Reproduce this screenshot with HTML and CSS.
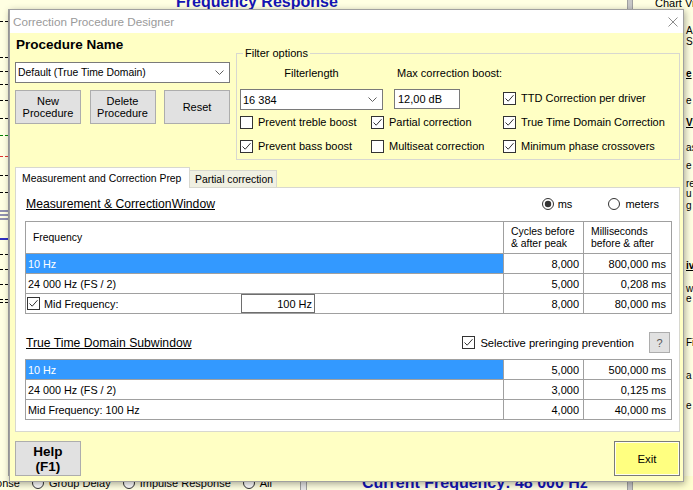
FILE: index.html
```html
<!DOCTYPE html>
<html>
<head>
<meta charset="utf-8">
<title>Correction Procedure Designer</title>
<link rel="stylesheet" href="styles.css">
</head>
<body>
<div class="app">
  <div class="app-top">
    <div class="app-title-area"><span class="app-title">Frequency Response</span></div>
    <div class="app-split"></div>
    <div class="app-chartview"><span class="gb-line"></span><span class="cv-text">Chart View</span></div>
  </div>
  <div class="app-mid">
    <div class="legend">
      <i class="lg"></i><i class="lg"></i><i class="lg"></i><i class="lg"></i><i class="lg"></i>
      <i class="lg"></i><i class="lg green"></i><i class="lg red"></i><i class="lg"></i><i class="lg"></i>
      <i class="lg gray"></i><i class="lg gray"></i><i class="lg gray"></i><i class="lg blue"></i><i class="lg"></i>
      <i class="lg"></i><i class="lg"></i><i class="lg"></i><i class="lg"></i>
    </div>
    <div class="app-center"></div>
    <div class="side">
      <span class="sw">Auto</span><span class="sw">Show</span><span class="sw bu">e</span><span class="sw">e</span>
      <span class="sw bu">View</span><span class="sw">as</span><span class="sw">e</span><span class="sw">re</span>
      <span class="sw">u</span><span class="sw">g</span><span class="sw bu">iv</span><span class="sw">w</span>
      <span class="sw">e</span><span class="sw">Fi</span><span class="sw">a</span><span class="sw">e</span>
    </div>
  </div>
  <div class="app-bottom">
    <div class="bt-left">
      <span>Response</span><span class="rd"></span><span>Group Delay</span><span class="rd"></span><span>Impulse Response</span><span class="rd"></span><span>All</span>
    </div>
    <div class="bt-sep"></div>
    <div class="bt-freq">Current Frequency: 48 000 Hz</div>
    <div class="app-split"></div>
    <div class="bt-right"></div>
  </div>
</div>

<div class="dialog">
  <div class="titlebar">
    <span class="title">Correction Procedure Designer</span>
    <svg class="close" width="10" height="10" viewBox="0 0 10 10"><path d="M0.5 0.5L9.5 9.5M9.5 0.5L0.5 9.5" stroke="#8c8c8c" stroke-width="1" fill="none"/></svg>
  </div>
  <div class="dbody">
    <div class="top">
      <div class="proc">
        <div class="proc-title">Procedure Name</div>
        <div class="combo proc-combo"><span class="combo-text">Default (True Time Domain)</span><svg class="chev" width="9" height="5" viewBox="0 0 9 5"><path d="M0.5 0.5L4.5 4.5L8.5 0.5" fill="none" stroke="#606060"/></svg></div>
        <div class="btn-row">
          <div class="btn">New<br>Procedure</div>
          <div class="btn">Delete<br>Procedure</div>
          <div class="btn">Reset</div>
        </div>
      </div>
      <fieldset class="filter">
        <legend>Filter options</legend>
        <div class="f-labels"><span class="f-lab1">Filterlength</span><span class="f-lab2">Max correction boost:</span></div>
        <div class="f-inputs">
          <div class="combo fl-combo"><span class="fl-text">16 384</span><svg class="chev" width="9" height="5" viewBox="0 0 9 5"><path d="M0.5 0.5L4.5 4.5L8.5 0.5" fill="none" stroke="#606060"/></svg></div>
          <div class="textbox boost">12,00 dB</div>
          <div class="cb ttd"><svg class="ck" width="13" height="13" viewBox="0 0 13 13"><rect x="0.5" y="0.5" width="12" height="12" fill="#fff" stroke="#333"/><path d="M2.5 6.5L5.2 9.2L10.5 3.2" fill="none" stroke="#333"/></svg><span>TTD Correction per driver</span></div>
        </div>
        <div class="f-grid">
          <div class="cb"><svg class="ck" width="13" height="13" viewBox="0 0 13 13"><rect x="0.5" y="0.5" width="12" height="12" fill="#fff" stroke="#333"/></svg><span>Prevent treble boost</span></div>
          <div class="cb"><svg class="ck" width="13" height="13" viewBox="0 0 13 13"><rect x="0.5" y="0.5" width="12" height="12" fill="#fff" stroke="#333"/><path d="M2.5 6.5L5.2 9.2L10.5 3.2" fill="none" stroke="#333"/></svg><span>Partial correction</span></div>
          <div class="cb"><svg class="ck" width="13" height="13" viewBox="0 0 13 13"><rect x="0.5" y="0.5" width="12" height="12" fill="#fff" stroke="#333"/><path d="M2.5 6.5L5.2 9.2L10.5 3.2" fill="none" stroke="#333"/></svg><span>True Time Domain Correction</span></div>
          <div class="cb"><svg class="ck" width="13" height="13" viewBox="0 0 13 13"><rect x="0.5" y="0.5" width="12" height="12" fill="#fff" stroke="#333"/><path d="M2.5 6.5L5.2 9.2L10.5 3.2" fill="none" stroke="#333"/></svg><span>Prevent bass boost</span></div>
          <div class="cb"><svg class="ck" width="13" height="13" viewBox="0 0 13 13"><rect x="0.5" y="0.5" width="12" height="12" fill="#fff" stroke="#333"/></svg><span>Multiseat correction</span></div>
          <div class="cb"><svg class="ck" width="13" height="13" viewBox="0 0 13 13"><rect x="0.5" y="0.5" width="12" height="12" fill="#fff" stroke="#333"/><path d="M2.5 6.5L5.2 9.2L10.5 3.2" fill="none" stroke="#333"/></svg><span>Minimum phase crossovers</span></div>
        </div>
      </fieldset>
    </div>

    <div class="tabs">
      <div class="tab active">Measurement and Correction Prep</div>
      <div class="tab">Partial correction</div>
    </div>

    <div class="panel">
      <div class="sec-head">
        <span class="sec-title">Measurement &amp; CorrectionWindow</span>
        <div class="radios">
          <svg class="rb" width="12" height="12" viewBox="0 0 12 12"><circle cx="6" cy="6" r="5.5" fill="#fff" stroke="#333"/><circle cx="6" cy="6" r="3.2" fill="#333"/></svg><span class="rl">ms</span>
          <svg class="rb rb2" width="12" height="12" viewBox="0 0 12 12"><circle cx="6" cy="6" r="5.5" fill="#fff" stroke="#333"/></svg><span class="rl rl2">meters</span>
        </div>
      </div>

      <div class="grid g1">
        <div class="c hd hd1">Frequency</div>
        <div class="c hd">Cycles before<br>&amp; after peak</div>
        <div class="c hd">Milliseconds<br>before &amp; after</div>

        <div class="c sel">10 Hz</div>
        <div class="c num">8,000</div>
        <div class="c num n3">800,000 ms</div>

        <div class="c">24 000 Hz (FS / 2)</div>
        <div class="c num">5,000</div>
        <div class="c num n3">0,208 ms</div>

        <div class="c mid">
          <div class="mid-lab"><svg class="ck" width="13" height="13" viewBox="0 0 13 13"><rect x="0.5" y="0.5" width="12" height="12" fill="#fff" stroke="#333"/><path d="M2.5 6.5L5.2 9.2L10.5 3.2" fill="none" stroke="#333"/></svg><span>Mid Frequency:</span></div>
          <div class="mid-box">100 Hz</div>
        </div>
        <div class="c num">8,000</div>
        <div class="c num n3">80,000 ms</div>
      </div>

      <div class="sec-head h2">
        <span class="sec-title">True Time Domain Subwindow</span>
        <div class="cb sel-pre"><svg class="ck" width="13" height="13" viewBox="0 0 13 13"><rect x="0.5" y="0.5" width="12" height="12" fill="#fff" stroke="#333"/><path d="M2.5 6.5L5.2 9.2L10.5 3.2" fill="none" stroke="#333"/></svg><span>Selective preringing prevention</span></div>
        <div class="qbtn">?</div>
      </div>

      <div class="grid g2">
        <div class="c sel">10 Hz</div>
        <div class="c num">5,000</div>
        <div class="c num n3">500,000 ms</div>

        <div class="c">24 000 Hz (FS / 2)</div>
        <div class="c num">3,000</div>
        <div class="c num n3">0,125 ms</div>

        <div class="c">Mid Frequency: 100 Hz</div>
        <div class="c num">4,000</div>
        <div class="c num n3">40,000 ms</div>
      </div>
    </div>

    <div class="footer">
      <div class="btn help">Help<br>(F1)</div>
      <div class="btn exit">Exit</div>
    </div>
  </div>
</div>
</body>
</html>
```

FILE: styles.css
```css
* { box-sizing: border-box; }
html, body { margin: 0; padding: 0; }
body {
  width: 693px;
  height: 490px;
  overflow: hidden;
  position: relative;
  background: #ffffe2;
  font-family: "Liberation Sans", Arial, sans-serif;
  font-size: 11px;
  color: #000;
}

/* ---------- background application ---------- */
.app {
  display: grid;
  grid-template-rows: 9px 1fr 14px;
  height: 490px;
}
.app-top { display: flex; height: 9px; overflow: hidden; }
.app-title-area {
  width: 627px;
  display: flex;
  align-items: flex-end;
  padding-left: 176px;
  overflow: hidden;
  background: #ffffe2;
}
.app-title {
  font-weight: bold;
  font-size: 16px;
  line-height: 15px;
  height: 15px;
  color: #1414b4;
  white-space: nowrap;
}
.app-split { width: 6px; background: #c8c8c8; border-left: 1px solid #a0a0a0; border-right: 1px solid #a0a0a0; }
.app-chartview {
  flex: 1;
  display: flex;
  align-items: flex-end;
  background: #ffffe2;
  overflow: hidden;
  padding-left: 20px;
}
.gb-line { width: 7px; height: 1px; background: #c8c8c8; align-self: center; margin-right: 2px; }
.cv-text { line-height: 11px; height: 11px; white-space: nowrap; }

.app-mid { display: grid; grid-template-columns: 9px 1fr 9px; overflow: hidden; }
.legend { display: flex; flex-direction: column; align-items: flex-start; background: #ffffe2; border-right: 1px solid #a8a8a8; }
.lg {
  display: block;
  width: 8px;
  height: 1px;
  background: repeating-linear-gradient(90deg, #000 0 3px, transparent 3px 5px);
}
.lg.green { background: repeating-linear-gradient(90deg, #008000 0 3px, transparent 3px 5px); }
.lg.red { background: repeating-linear-gradient(90deg, #e03030 0 3px, transparent 3px 5px); }
.lg.gray { background: #9090b0; height: 2px; }
.lg.blue { background: #3030c0; height: 2px; }
.lg:nth-child(1) { margin-top: 12px; }
.lg:nth-child(2) { margin-top: 35px; }
.lg:nth-child(3) { margin-top: 13px; }
.lg:nth-child(4) { margin-top: 12px; }
.lg:nth-child(5) { margin-top: 15px; }
.lg:nth-child(6) { margin-top: 17px; }
.lg:nth-child(7) { margin-top: 16px; }
.lg:nth-child(8) { margin-top: 20px; }
.lg:nth-child(9) { margin-top: 18px; }
.lg:nth-child(10) { margin-top: 16px; }
.lg:nth-child(11) { margin-top: 17px; }
.lg:nth-child(12) { margin-top: 2px; }
.lg:nth-child(13) { margin-top: 2px; }
.lg:nth-child(14) { margin-top: 18px; }
.lg:nth-child(15) { margin-top: 14px; }
.lg:nth-child(16) { margin-top: 14px; }
.lg:nth-child(17) { margin-top: 14px; }
.lg:nth-child(18) { margin-top: 14px; }
.lg:nth-child(19) { margin-top: 2px; }

.app-center { background: #ffffff; }
.side {
  display: flex;
  flex-direction: column;
  background: #ffffe2;
  overflow: hidden;
  padding-left: 2px;
}
.sw { display: block; font-size: 10px; line-height: 9px; height: 9px; white-space: nowrap; }
.sw.bu { font-weight: bold; text-decoration: underline; }
.sw:nth-child(1) { margin-top: 17px; }
.sw:nth-child(2) { margin-top: 2px; }
.sw:nth-child(3) { margin-top: 23px; }
.sw:nth-child(4) { margin-top: 18px; }
.sw:nth-child(5) { margin-top: 13px; }
.sw:nth-child(6) { margin-top: 16px; }
.sw:nth-child(7) { margin-top: 9px; }
.sw:nth-child(8) { margin-top: 9px; }
.sw:nth-child(9) { margin-top: 1px; }
.sw:nth-child(10) { margin-top: 3px; }
.sw:nth-child(11) { margin-top: 51px; }
.sw:nth-child(12) { margin-top: 14px; }
.sw:nth-child(13) { margin-top: 1px; }
.sw:nth-child(14) { margin-top: 35px; }
.sw:nth-child(15) { margin-top: 24px; }
.sw:nth-child(16) { margin-top: 21px; }

.app-bottom { display: flex; height: 14px; overflow: hidden; background: #ffffe2; }
.bt-left {
  width: 300px;
  display: flex;
  align-items: center;
  justify-content: flex-end;
  padding-right: 28px;
  line-height: 14px;
  white-space: nowrap;
  overflow: hidden;
}
.rd { width: 12px; height: 12px; border: 1px solid #333; border-radius: 50%; background: #fff; margin: 0 5px 0 12px; flex: none; }
.bt-sep { width: 7px; border-left: 1px solid #a0a0a0; border-right: 1px solid #a0a0a0; background: #e8e8e8; }
.bt-freq {
  width: 320px;
  padding-left: 55px;
  font-weight: bold;
  font-size: 16px;
  line-height: 14px;
  color: #1414b4;
  white-space: nowrap;
  overflow: hidden;
}
.bt-right { flex: 1; background: #ffffd0; }

/* ---------- dialog window ---------- */
.dialog {
  position: absolute;
  left: 9px;
  top: 9px;
  width: 675px;
  height: 473px;
  border: 1px solid #a0a0a0;
  background: #ffffc4;
  box-shadow: 1px 2px 7px rgba(0, 0, 0, 0.35);
  display: flex;
  flex-direction: column;
}
.titlebar {
  height: 23px;
  flex: none;
  background: #fff;
  display: flex;
  align-items: center;
  padding-left: 3px;
}
.title { font-size: 11.7px; color: #9a9a9a; white-space: nowrap; }
.close { margin-left: auto; margin-right: 5px; }

.dbody {
  flex: 1;
  display: flex;
  flex-direction: column;
  padding: 0 3px 5px 5px;
}

.top { display: flex; gap: 6px; height: 127px; flex: none; }
.proc { width: 215px; display: flex; flex-direction: column; padding-top: 4px; }
.proc-title { font-weight: bold; font-size: 13.5px; line-height: 15px; height: 15px; padding-left: 1px; white-space: nowrap; }
.combo {
  display: flex;
  align-items: center;
  background: #fff;
  border: 1px solid #7a7a7a;
  padding-left: 2px;
}
.combo .chev { margin-left: auto; margin-right: 5px; }
.proc-combo { margin-top: 10px; height: 21px; }
.combo-text { font-size: 10.4px; white-space: nowrap; }
.btn-row { margin-top: 7px; display: flex; justify-content: space-between; }
.btn {
  width: 66px;
  height: 34px;
  background: #e1e1e1;
  border: 1px solid #adadad;
  display: flex;
  align-items: center;
  justify-content: center;
  text-align: center;
  line-height: 12px;
  font-size: 11px;
}

.filter {
  margin: 13px 0 0 0;
  padding: 0 3px;
  width: 444px;
  height: 114px;
  border: 1px solid #d8d8d0;
  min-width: 0;
}
.filter legend { padding: 0 2px; margin-left: 3px; font-size: 11px; line-height: 14px; }
.f-labels { display: flex; margin-top: 6px; height: 14px; line-height: 14px; white-space: nowrap; }
.f-lab1 { width: 143px; text-align: center; }
.f-lab2 { margin-left: 11px; padding-left: 3px; }
.f-inputs { display: flex; align-items: flex-start; margin-top: 9px; height: 21px; }
.fl-combo { width: 143px; height: 21px; }
.fl-text { font-size: 11px; }
.textbox { background: #fff; border: 1px solid #7a7a7a; padding-left: 3px; display: flex; align-items: center; }
.boost { margin-left: 11px; width: 66px; height: 20px; }
.cb { display: flex; align-items: center; gap: 5px; height: 14px; white-space: nowrap; }
.ck { flex: none; }
.ttd { margin-left: 43px; margin-top: 2px; }
.f-grid {
  display: grid;
  grid-template-columns: 131px 132px 1fr;
  grid-auto-rows: 14px;
  row-gap: 10px;
  margin-top: 5px;
}

.tabs { display: flex; align-items: flex-end; margin-top: 7px; height: 20px; flex: none; }
.tab {
  height: 17px;
  width: 87px;
  padding-left: 5px;
  background: #f0f0e2;
  border: 1px solid #d8d8d0;
  border-left: none;
  border-bottom: none;
  display: flex;
  align-items: center;
  font-size: 10.4px;
  white-space: nowrap;
}
.tab.active {
  position: relative;
  width: 175px;
  height: 21px;
  margin-bottom: -1px;
  padding-left: 6px;
  background: #fff;
  border-left: 1px solid #d8d8d0;
}

.panel {
  height: 245px;
  flex: none;
  background: #fff;
  border: 1px solid #d8d8d0;
  padding: 0 8px 0 9px;
  display: flex;
  flex-direction: column;
}
.sec-head { display: flex; align-items: center; height: 20px; margin-top: 6px; flex: none; }
.sec-title { font-size: 12.2px; text-decoration: underline; padding-left: 1px; white-space: nowrap; }
.radios { margin-left: auto; margin-right: 12px; display: flex; align-items: center; }
.rl { margin-left: 4px; }
.rb2 { margin-left: 36px; }
.rl2 { margin-left: 5px; }

.grid {
  display: grid;
  grid-template-columns: 477px 79px 87px;
  gap: 1px;
  background: #a0a0a0;
  border: 1px solid #a0a0a0;
  width: 647px;
  flex: none;
}
.g1 { grid-template-rows: 31px 19px 19px 19px; margin-top: 7px; }
.g2 { grid-template-rows: 19px 19px 19px; margin-top: 6px; }
.c {
  background: #fff;
  display: flex;
  align-items: center;
  padding: 0 2px;
  font-size: 10.8px;
  white-space: nowrap;
}
.c.hd { font-size: 10.4px; line-height: 12px; padding-left: 7px; }
.c.sel { background: #3399ff; color: #fff; }
.c.num { justify-content: flex-end; padding-right: 4px; font-size: 11px; }
.c.n3 { padding-right: 5px; }
.c.mid { padding: 0 0 0 1px; }
.mid-lab { flex: 0 0 214px; display: flex; align-items: center; gap: 4px; }
.mid-box {
  width: 74px;
  height: 19px;
  border: 1px solid #6e6e6e;
  display: flex;
  align-items: center;
  justify-content: flex-end;
  padding-right: 2px;
  font-size: 11px;
}

.sec-head.h2 { margin-top: 18px; height: 21px; }
.sel-pre { margin-left: auto; font-size: 11.2px; }
.qbtn {
  margin-left: 15px;
  margin-right: 1px;
  width: 21px;
  height: 21px;
  background: #e1e1e1;
  border: 1px solid #adadad;
  display: flex;
  align-items: center;
  justify-content: center;
  color: #555;
  font-size: 11px;
}

.footer { display: flex; justify-content: space-between; margin-top: 9px; height: 35px; flex: none; }
.footer .btn { height: 35px; }
.help { font-weight: bold; font-size: 13.5px; line-height: 15px; }
.exit { background: #ffff80; border: 1px solid #7a7a7a; box-shadow: inset 0 0 0 1px #fffff0; font-size: 11.4px; }
```
